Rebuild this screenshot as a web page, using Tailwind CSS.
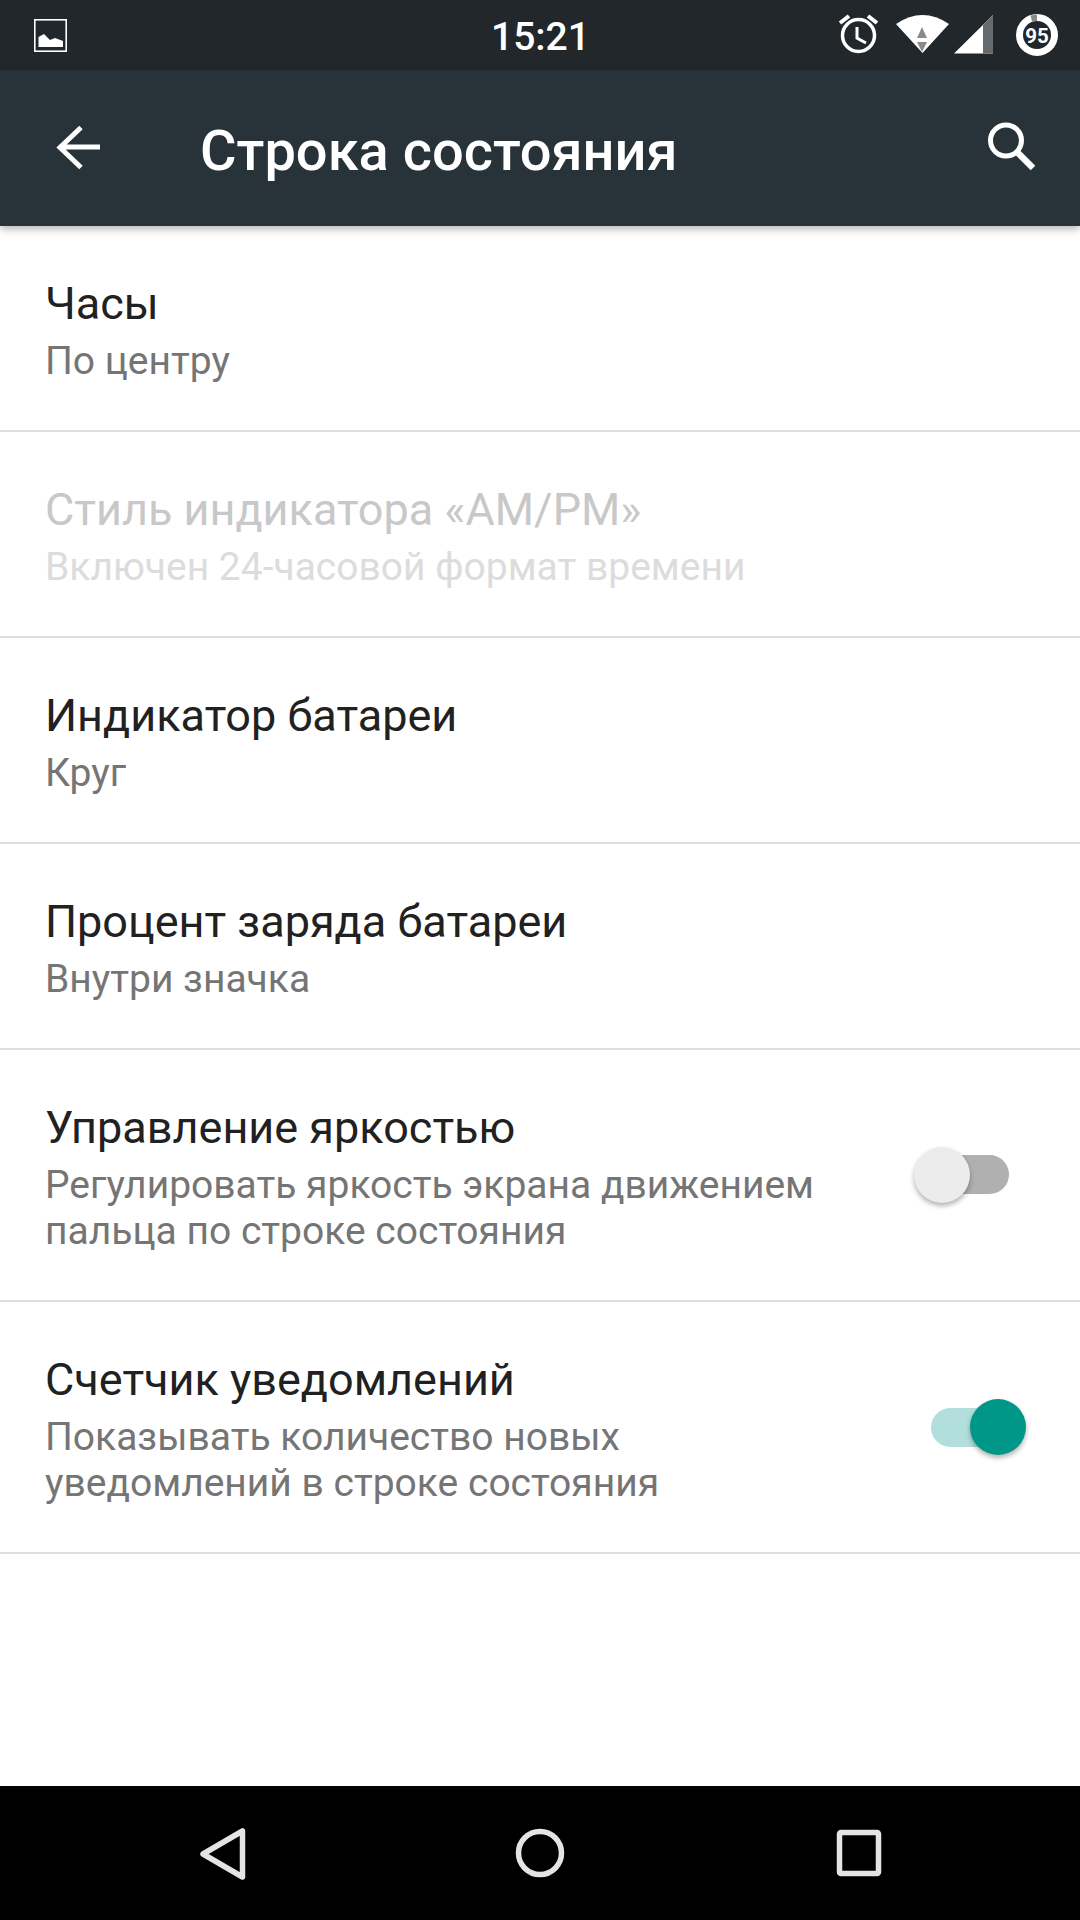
<!DOCTYPE html>
<html lang="ru">
<head>
    <meta charset="UTF-8">
    <meta name="viewport" content="width=device-width, initial-scale=1.0">
    <title>Строка состояния</title>
    <script src="https://cdn.jsdelivr.net/npm/@tailwindcss/browser@4"></script>
</head>
<body class="bg-white font-[Roboto,sans-serif]">
<div class="w-[1080px] h-[1920px] flex flex-col overflow-hidden">
    <!-- status bar -->
    <div class="h-[70px] bg-[#21272b] flex items-center relative shrink-0">
        <svg class="absolute left-[34px] top-[19px]" width="33" height="33" viewBox="0 0 33 33">
            <rect x="0.800" y="0.800" width="31.400" height="31.400" fill="none" stroke="#fff" stroke-width="1.600"/>
            <path d="M4.500 28V18L10 15L16 21L21 19L29 22V28Z" fill="#fff"/>
        </svg>
        <div class="absolute left-[491px] top-[15px] text-white text-[39px] leading-[44px] font-medium">15:21</div>
        <svg class="absolute left-[838px] top-[14px]" width="42" height="42" viewBox="0 0 42 42">
            <circle cx="20.500" cy="21.500" r="16" fill="none" stroke="#fff" stroke-width="3.500"/>
            <path d="M19 13V24L28 29" fill="none" stroke="#fff" stroke-width="3"/>
            <path d="M2 9L11 2M30 2L39 9" stroke="#fff" stroke-width="4"/>
        </svg>
        <svg class="absolute left-[896px] top-[15px]" width="54" height="40" viewBox="0 0 54 40">
            <path d="M0 9Q26.500 -9 53 9L26.500 38Z" fill="#fff"/>
            <path d="M26 12L31 23H21Z" fill="#8a8a8a"/>
            <path d="M21 27H31L26 37Z" fill="#8a8a8a"/>
        </svg>
        <svg class="absolute left-[954px] top-[15px]" width="39" height="39" viewBox="0 0 39 39">
            <path d="M0 38.500L39 0V38.500Z" fill="#fff"/>
            <path d="M29 10L39 0V38.500H29Z" fill="#676a6d"/>
        </svg>
        <svg class="absolute left-[1016px] top-[14px]" width="42" height="42" viewBox="0 0 42 42">
            <circle cx="21" cy="21" r="17.500" fill="none" stroke="#fff" stroke-width="7"/>
            <path d="M16 7.500L21 7V0.500L14.500 1.500Z" fill="#8a8a8a"/>
            <text x="21" y="28.500" text-anchor="middle" font-family="Roboto" font-weight="700" font-size="20.500" fill="#fff">95</text>
        </svg>
    </div>
    <!-- toolbar -->
    <div class="h-[156px] bg-[#283339] flex items-center relative shrink-0 z-10 shadow-[0_3px_8px_rgba(0,0,0,0.3)]">
        <svg class="ml-[56px]" width="46" height="46" viewBox="0 0 46 46">
            <path d="M3 22H44M25 2.500L4 22.500L25 42.500" fill="none" stroke="#fff" stroke-width="5"/>
        </svg>
        <div class="ml-[98px] pt-[5px] text-white text-[56px] leading-[64px] font-medium">Строка состояния</div>
        <svg class="absolute left-[986px] top-[51px]" width="52" height="52" viewBox="0 0 52 52">
            <circle cx="20" cy="19.500" r="15.500" fill="none" stroke="#fff" stroke-width="5"/>
            <path d="M31 31L47 47" stroke="#fff" stroke-width="6.500"/>
        </svg>
    </div>
    <!-- list -->
    <div class="flex-1 flex flex-col">
        <div class="h-[206px] border-b-2 border-[#dedede] pl-[45px] pt-[52px]">
            <div class="text-[45px] leading-[52px] text-[#212121]">Часы</div>
            <div class="mt-[8px] text-[39px] leading-[46px] text-[#757575]">По центру</div>
        </div>
        <div class="h-[206px] border-b-2 border-[#dedede] pl-[45px] pt-[52px]">
            <div class="text-[45px] leading-[52px] text-[#c8c8c8]">Стиль индикатора «AM/PM»</div>
            <div class="mt-[8px] text-[39px] leading-[46px] text-[#dcdcdc]">Включен 24-часовой формат времени</div>
        </div>
        <div class="h-[206px] border-b-2 border-[#dedede] pl-[45px] pt-[52px]">
            <div class="text-[45px] leading-[52px] text-[#212121]">Индикатор батареи</div>
            <div class="mt-[8px] text-[39px] leading-[46px] text-[#757575]">Круг</div>
        </div>
        <div class="h-[206px] border-b-2 border-[#dedede] pl-[45px] pt-[52px]">
            <div class="text-[45px] leading-[52px] text-[#212121]">Процент заряда батареи</div>
            <div class="mt-[8px] text-[39px] leading-[46px] text-[#757575]">Внутри значка</div>
        </div>
        <div class="h-[252px] border-b-2 border-[#dedede] pl-[45px] flex items-center justify-between">
            <div class="self-start pt-[52px]">
                <div class="text-[45px] leading-[52px] text-[#212121]">Управление яркостью</div>
                <div class="mt-[8px] text-[39px] leading-[46px] text-[#757575]">Регулировать яркость экрана движением<br>пальца по строке состояния</div>
            </div>
            <div class="relative w-[111px] h-[56px] mr-[55px]">
                <div class="absolute left-[21px] top-[8px] w-[74px] h-[39px] rounded-full bg-[#b0b0b0]"></div>
                <div class="absolute left-0 top-0 w-[56px] h-[56px] rounded-full bg-[#ececec] shadow-[0_3px_5px_rgba(0,0,0,0.3)]"></div>
            </div>
        </div>
        <div class="h-[252px] border-b-2 border-[#dedede] pl-[45px] flex items-center justify-between">
            <div class="self-start pt-[52px]">
                <div class="text-[45px] leading-[52px] text-[#212121]">Счетчик уведомлений</div>
                <div class="mt-[8px] text-[39px] leading-[46px] text-[#757575]">Показывать количество новых<br>уведомлений в строке состояния</div>
            </div>
            <div class="relative w-[111px] h-[56px] mr-[55px]">
                <div class="absolute left-[17px] top-[9px] w-[74px] h-[39px] rounded-full bg-[#b2dfdb]"></div>
                <div class="absolute left-[56px] top-0 w-[56px] h-[56px] rounded-full bg-[#009688] shadow-[0_3px_5px_rgba(0,0,0,0.3)]"></div>
            </div>
        </div>
    </div>
    <!-- nav bar -->
    <div class="h-[134px] bg-black relative shrink-0">
        <svg class="absolute left-[198px] top-[40px]" width="50" height="56" viewBox="0 0 50 56">
            <path d="M44.500 5V51L5 28Z" fill="none" stroke="#e4e4e4" stroke-width="5.500" stroke-linejoin="round"/>
        </svg>
        <svg class="absolute left-[514px] top-[41px]" width="52" height="52" viewBox="0 0 52 52">
            <circle cx="26" cy="26" r="21.500" fill="none" stroke="#e4e4e4" stroke-width="5.500"/>
        </svg>
        <svg class="absolute left-[835px] top-[42px]" width="48" height="50" viewBox="0 0 48 50">
            <rect x="4.500" y="4.500" width="39" height="41" rx="1.500" fill="none" stroke="#e4e4e4" stroke-width="5.500"/>
        </svg>
    </div>
</div>
</body>
</html>
